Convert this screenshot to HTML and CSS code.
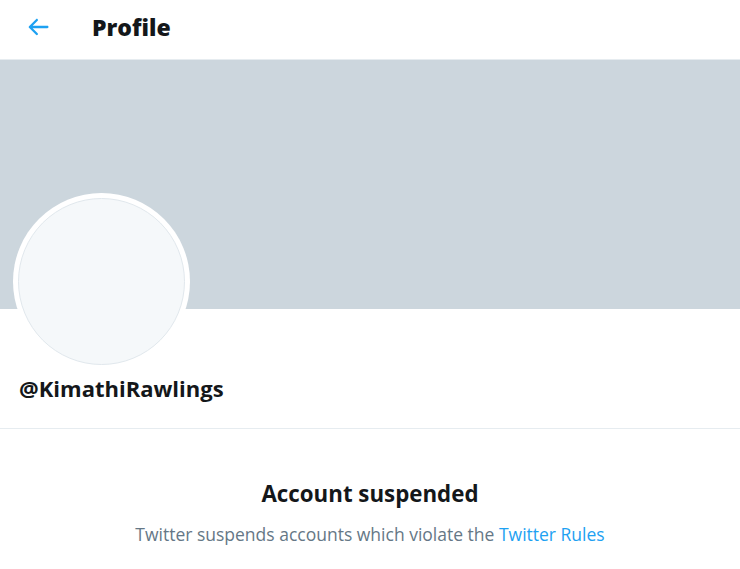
FILE: index.html
```html
<!DOCTYPE html>
<html>
<head>
<meta charset="utf-8">
<link rel="stylesheet" href="styles.css">
</head>
<body>
<header class="topbar">
  <div class="back">
    <svg viewBox="0 0 24 24" width="28" height="28"><path fill="#1da1f2" d="M20 11H7.414l4.293-4.293c.39-.39.39-1.023 0-1.414s-1.023-.39-1.414 0l-6 6c-.39.39-.39 1.023 0 1.414l6 6c.195.195.45.293.707.293s.512-.098.707-.293c.39-.39.39-1.023 0-1.414L7.414 13H20c.553 0 1-.447 1-1s-.447-1-1-1z"/></svg>
  </div>
  <h1 class="title">Profile</h1>
</header>
<div class="banner"></div>
<div class="profile">
  <div class="avatar-ring"><div class="avatar"></div></div>
  <div class="handle">@KimathiRawlings</div>
</div>
<section class="suspended">
  <h2 class="s-title">Account suspended</h2>
  <p class="s-text">Twitter suspends accounts which violate the <a href="#">Twitter Rules</a></p>
</section>
</body>
</html>
```
FILE: styles.css
```css
html, body { margin: 0; padding: 0; background: #fff; }
body { font-family: "Open Sans", "Noto Sans", sans-serif; color: #14171a; }
.topbar {
  height: 59px;
  border-bottom: 1px solid #e6ecf0;
  display: flex;
  align-items: center;
}
.back {
  width: 92px;
  padding-left: 24px;
  box-sizing: border-box;
  display: flex;
  align-items: center;
  padding-bottom: 6px;
}
.title {
  margin: 0;
  font-size: 23px;
  font-weight: 800;
  padding-bottom: 6px;
}
.banner { height: 249px; background: #ccd6dd; }
.profile {
  display: flex; flex-direction: column;
  padding-left: 13px; height: 119px;
  border-bottom: 1px solid #e6ecf0;
}
.avatar-ring {
  width: 177px; height: 177px; border-radius: 50%;
  background: #fff; margin-top: -116px;
  display: flex; align-items: center; justify-content: center;
  flex: none;
}
.avatar {
  width: 165px; height: 165px; border-radius: 50%;
  background: #f5f8fa; border: 1px solid #e1e8ed;
}
.handle {
  margin: 4px 0 0 6px;
  font-size: 22px; font-weight: 700; line-height: 28px;
}
.suspended { text-align: center; padding-top: 50px; }
.s-title { margin: 0; font-size: 22.3px; font-weight: 700; line-height: 30px; }
.s-text { margin: 13px 0 0; font-size: 17.5px; color: #657786; line-height: 24px; }
.s-text a { color: #1da1f2; text-decoration: none; }
```
